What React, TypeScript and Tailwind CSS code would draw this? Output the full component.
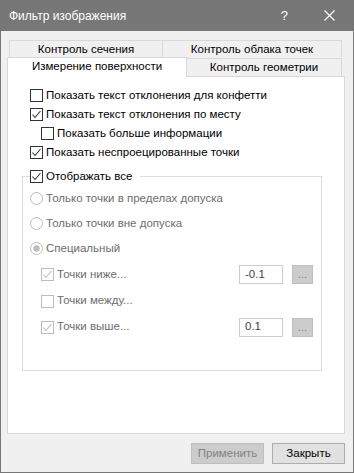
import React from "react";

const F = { fontFamily: '"Liberation Sans", Arial, sans-serif' };

function Check({ checked, disabled }: { checked?: boolean; disabled?: boolean }) {
  const c = disabled ? "#bcbcbc" : "#333333";
  return (
    <svg width="13" height="13" viewBox="0 0 13 13" className="shrink-0">
      <rect x="0.5" y="0.5" width="12" height="12" fill="#ffffff" stroke={c} />
      {checked && (
        <polyline points="2.5,6.5 5,9.5 10.5,3" fill="none" stroke={c} strokeWidth="1.1" />
      )}
    </svg>
  );
}

function Radio({ checked }: { checked?: boolean }) {
  return (
    <svg width="13" height="13" viewBox="0 0 13 13" className="shrink-0">
      <circle cx="6.5" cy="6.5" r="6" fill="#ffffff" stroke="#bcbcbc" />
      {checked && <circle cx="6.5" cy="6.5" r="3.2" fill="#bcbcbc" />}
    </svg>
  );
}

function CheckRow({ label, checked, indent }: { label: string; checked?: boolean; indent?: boolean }) {
  return (
    <div className={`flex h-[19px] items-center ${indent ? "pl-[33px]" : "pl-[22px]"}`}>
      <Check checked={checked} />
      <span className="ml-[3px] text-[11.5px] text-black">{label}</span>
    </div>
  );
}

function RadioRow({ label, checked }: { label: string; checked?: boolean }) {
  return (
    <div className="flex h-[25px] items-center pl-[7px]">
      <Radio checked={checked} />
      <span className="ml-[3px] text-[11.5px] text-[#6d6d6d]">{label}</span>
    </div>
  );
}

function SubRow({ label, checked, value, h }: { label: string; checked?: boolean; value?: string; h: string }) {
  return (
    <div className={`flex ${h} items-center pl-[18px] pr-[8px]`}>
      <Check checked={checked} disabled />
      <span className="ml-[3px] text-[11.5px] text-[#6d6d6d]">{label}</span>
      {value !== undefined && (
        <div className="ml-auto flex items-center gap-[9px]">
          <div className="flex h-[19px] w-[44px] items-center border border-[#cccccc] bg-white pl-[5px] text-[11.5px] text-[#444444]">
            {value}
          </div>
          <div className="flex h-[19px] w-[21px] items-center justify-center border border-[#bfbfbf] bg-[#cccccc] text-[11px] text-[#838383]">
            ...
          </div>
        </div>
      )}
    </div>
  );
}

export default function App() {
  return (
    <div style={F} className="flex h-[473px] w-[354px] flex-col border-x border-b border-[#777777] bg-[#f0f0f0]">
      {/* Title bar */}
      <div className="-mx-px flex h-[31px] shrink-0 items-center bg-[#777777] pl-[9px] text-white">
        <span className="text-[12px]">Фильтр изображения</span>
        <span className="ml-auto mr-[36px] text-[13px]">?</span>
        <svg width="11" height="11" viewBox="0 0 11 11" className="mr-[19px]">
          <path d="M0.5 0.5 L10.5 10.5 M10.5 0.5 L0.5 10.5" stroke="#ffffff" strokeWidth="1.2" />
        </svg>
      </div>

      {/* Tabs row 1 */}
      <div className="ml-[8px] mt-[9px] flex h-[17px] shrink-0 text-[11.5px] text-black">
        <div className="flex w-[153px] items-center justify-center border-l border-t border-[#d9d9d9] pt-[1px]">
          Контроль сечения
        </div>
        <div className="flex w-[180px] items-center justify-center border-x border-t border-[#d9d9d9] pt-[1px]">
          Контроль облака точек
        </div>
      </div>

      {/* Tabs row 2 */}
      <div className="ml-[6px] flex h-[20px] w-[338px] shrink-0 text-[11.5px] text-black">
        <div className="flex w-[180px] items-center justify-center border-x border-t border-[#d9d9d9] bg-white pb-[1px]">
          Измерение поверхности
        </div>
        <div className="flex flex-1 items-end border-b border-[#d9d9d9]">
          <div className="flex h-[18px] w-[155px] items-center justify-center border-r border-t border-[#d9d9d9]">
            Контроль геометрии
          </div>
        </div>
      </div>

      {/* Panel */}
      <div className="ml-[6px] flex h-[357px] w-[338px] shrink-0 flex-col border-x border-b border-[#d9d9d9] bg-white pt-[9px]">
        <CheckRow label="Показать текст отклонения для конфетти" />
        <CheckRow label="Показать текст отклонения по месту" checked />
        <CheckRow label="Показать больше информации" indent />
        <CheckRow label="Показать неспроецированные точки" checked />

        <fieldset className="ml-[14px] mt-[5px] w-[300px] shrink-0 border border-[#dcdcdc]">
          <legend className="ml-[7px] flex h-[19px] items-center pr-[8px]">
            <Check checked />
            <span className="ml-[3px] text-[11.5px] text-black">Отображать все</span>
          </legend>
          <RadioRow label="Только точки в пределах допуска" />
          <RadioRow label="Только точки вне допуска" />
          <RadioRow label="Специальный" checked />
          <SubRow label="Точки ниже..." checked value="-0.1" h="h-[27px]" />
          <SubRow label="Точки между..." h="h-[26px]" />
          <SubRow label="Точки выше..." checked value="0.1" h="h-[26px]" />
          <div className="h-[30px]" />
        </fieldset>
      </div>

      {/* Buttons */}
      <div className="mr-[8px] mt-[9px] flex justify-end gap-[8px] text-[11.5px]">
        <div className="flex h-[21px] w-[73px] items-center justify-center border border-[#bfbfbf] bg-[#cccccc] text-[#838383]">
          Применить
        </div>
        <div className="flex h-[21px] w-[73px] items-center justify-center border border-[#adadad] bg-[#e1e1e1] text-black">
          Закрыть
        </div>
      </div>
    </div>
  );
}
